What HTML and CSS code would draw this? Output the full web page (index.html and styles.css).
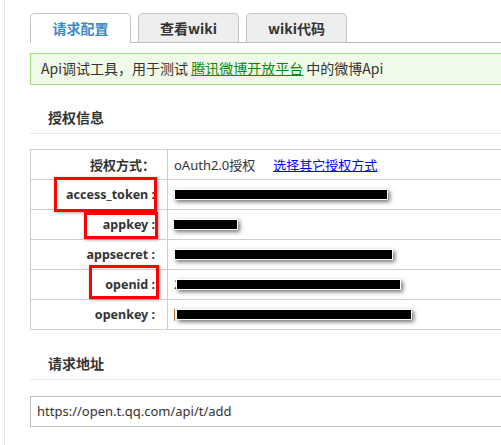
FILE: index.html
```html
<!DOCTYPE html>
<html lang="zh-CN">
<head>
<meta charset="utf-8">
<title>Api调试工具</title>
<link rel="stylesheet" href="styles.css">
</head>
<body>
<div class="page">
  <div class="tabs">
    <div class="tab active">请求配置</div>
    <div class="tab">查看wiki</div>
    <div class="tab">wiki代码</div>
  </div>
  <div class="notice">Api调试工具，用于测试 <a href="#" class="green">腾讯微博开放平台</a> 中的微博Api</div>

  <div class="heading">授权信息</div>
  <div class="grid">
    <div class="lbl">授权方式：</div>
    <div class="val">oAuth2.0授权<a href="#" class="blue">选择其它授权方式</a></div>
    <div class="lbl latin">access_token :</div>
    <div class="val"><span class="bar" style="margin-left:0;width:214px"></span></div>
    <div class="lbl latin">appkey :</div>
    <div class="val"><span class="bar" style="margin-left:-1px;width:65px"></span></div>
    <div class="lbl latin">appsecret :</div>
    <div class="val"><span class="bar" style="margin-left:0;width:219px"></span></div>
    <div class="lbl latin">openid :</div>
    <div class="val"><span class="frag">2</span><span class="bar" style="margin-left:-5px;width:225px"></span></div>
    <div class="lbl latin">openkey :</div>
    <div class="val"><span class="cursor"></span><span class="bar" style="margin-left:0;width:236px"></span></div>

    <div class="mark m1"></div>
    <div class="mark m2"></div>
    <div class="mark m3"></div>
  </div>

  <div class="heading h2">请求地址</div>
  <div class="url">https://open.t.qq.com/api/t/add</div>
</div>
</body>
</html>
```

FILE: styles.css
```css
html, body {
  margin: 0;
  padding: 0;
  background: #fff;
  overflow: hidden;
}
body {
  width: 501px;
  height: 445px;
  font-family: "Noto Sans", "Noto Sans CJK SC", sans-serif;
  color: #333;
}
.page {
  margin-left: 4px;
  border-left: 1px solid #e8e8e8;
  padding: 13px 0 0 25px;
  width: 560px;
  height: 445px;
  box-sizing: border-box;
}
.tabs {
  display: flex;
  gap: 7px;
  border-bottom: 1px solid #b9bec6;
  height: 29px;
}
.tab {
  width: 101px;
  height: 29px;
  box-sizing: border-box;
  border: 1px solid #bfc4cb;
  border-bottom: none;
  border-radius: 5px 5px 0 0;
  background: #eee;
  font-family: "Noto Sans CJK SC", sans-serif;
  font-weight: bold;
  font-size: 14px;
  line-height: 28px;
  text-align: center;
  color: #333;
}
.tab.active {
  background: #fff;
  color: #3b88c8;
  height: 30px;
}
.notice {
  margin-top: 10px;
  height: 32px;
  box-sizing: border-box;
  border: 1px solid #a3dc84;
  background: #f0fae9;
  padding-left: 10px;
  font-family: "Noto Sans CJK SC", sans-serif;
  font-size: 14px;
  line-height: 29px;
  color: #333;
}
.green { color: #0a8a0a; text-decoration: underline; }
.heading {
  margin-top: 16px;
  height: 33px;
  box-sizing: border-box;
  border-bottom: 1px solid #e3e9ee;
  padding-left: 18px;
  font-family: "Noto Sans CJK SC", sans-serif;
  font-weight: bold;
  font-size: 14px;
  line-height: 32px;
  color: #333;
}
.grid {
  position: relative;
  margin-top: 15px;
  display: grid;
  grid-template-columns: 137px 1fr;
  border-top: 1px solid #cfcfcf;
  border-left: 1px solid #cfcfcf;
}
.lbl, .val {
  height: 30px;
  box-sizing: border-box;
  border-right: 1px solid #cfcfcf;
  border-bottom: 1px solid #cfcfcf;
  display: flex;
  align-items: center;
  font-size: 13px;
}
.lbl {
  justify-content: flex-end;
  padding-right: 12px;
  font-family: "Noto Sans CJK SC", sans-serif;
  font-weight: bold;
  color: #333;
}
.lbl.latin {
  font-family: "Noto Sans", "Noto Sans CJK SC", sans-serif;
  font-size: 12.5px;
}
.val {
  padding-left: 6px;
  font-family: "Noto Sans", "Noto Sans CJK SC", sans-serif;
  color: #333;
}
.blue {
  color: #0000ee;
  text-decoration: underline;
  margin-left: 18px;
  font-family: "Noto Sans CJK SC", sans-serif;
}
.bar {
  display: inline-block;
  height: 11px;
  box-sizing: border-box;
  background: #000;
  border: 1px solid #fff;
  box-shadow: 2px 2px 4px rgba(0,0,0,0.55);
}
.frag {
  font-size: 12px;
  color: #6a5030;
}
.cursor {
  display: inline-block;
  width: 1px;
  height: 12px;
  background: #b07a40;
  margin-right: 1px;
}
.mark {
  position: absolute;
  border: 3px solid #f00;
  box-sizing: border-box;
  box-shadow: 1px 1px 3px rgba(0,0,0,0.35);
}
.m1 { left: 23px; top: 27px; width: 103px; height: 35px; }
.m2 { left: 53px; top: 62px; width: 74px; height: 27px; }
.m3 { left: 58px; top: 115px; width: 70px; height: 34px; }
.h2 { margin-top: 17px; }
.url {
  margin-top: 16px;
  height: 31px;
  box-sizing: border-box;
  border: 1px solid #b9c0ca;
  padding-left: 6px;
  font-size: 13px;
  line-height: 29px;
  color: #333;
  font-family: "Noto Sans", sans-serif;
}
```
